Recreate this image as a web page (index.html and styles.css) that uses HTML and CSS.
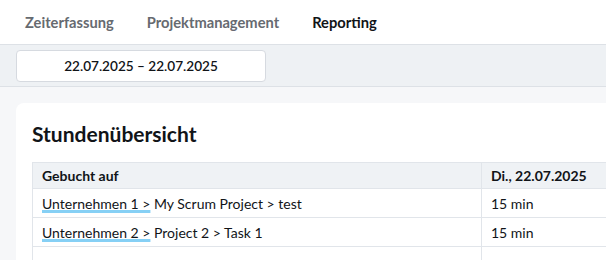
FILE: index.html
```html
<!DOCTYPE html>
<html lang="de">
  <head>
    <meta charset="UTF-8" />
    <meta name="viewport" content="width=device-width, initial-scale=1.0" />
    <title>Reporting</title>
    <link rel="stylesheet" href="styles.css">
  </head>
  <body>
    <header class="nav">
      <a class="nav-link">Zeiterfassung</a>
      <a class="nav-link">Projektmanagement</a>
      <a class="nav-link active">Reporting</a>
    </header>

    <div class="toolbar">
      <button class="date-range">22.07.2025 – 22.07.2025</button>
    </div>

    <main class="content">
      <section class="card">
        <h1>Stundenübersicht</h1>
        <table class="hours">
          <thead>
            <tr>
              <th class="col-target">Gebucht auf</th>
              <th class="col-day">Di., 22.07.2025</th>
            </tr>
          </thead>
          <tbody>
            <tr>
              <td><span class="company">Unternehmen 1 &gt;</span> My Scrum Project &gt; test</td>
              <td>15 min</td>
            </tr>
            <tr>
              <td><span class="company">Unternehmen 2 &gt;</span> Project 2 &gt; Task 1</td>
              <td>15 min</td>
            </tr>
            <tr class="empty">
              <td></td>
              <td></td>
            </tr>
          </tbody>
        </table>
      </section>
    </main>
  </body>
</html>
```

FILE: styles.css
```css
body {
  margin: 0;
  overflow: hidden;
  font-family: Lato, "Liberation Sans", sans-serif;
  color: #111418;
  background: #f6f7f9;
}

.nav {
  display: flex;
  gap: 33px;
  height: 44px;
  padding-left: 25px;
  align-items: center;
  background: #fff;
  border-bottom: 1px solid #dde1e6;
}

.nav-link {
  font-size: 14.7px;
  font-weight: 700;
  color: #666a70;
}

.nav-link.active {
  color: #111418;
}

.toolbar {
  height: 41px;
  padding-left: 16px;
  display: flex;
  align-items: center;
  background: #eef1f4;
  border-bottom: 1px solid #dde1e6;
}

.date-range {
  width: 250px;
  height: 32px;
  background: #fff;
  border: 1px solid #d6dae0;
  border-radius: 4px;
  font-family: inherit;
  font-size: 13.6px;
  font-weight: 600;
  color: #111418;
}

.content {
  padding: 16px 0 0 16px;
}

.card {
  width: 640px;
  height: 200px;
  padding: 0 16px;
  background: #fff;
  border-radius: 8px;
}

h1 {
  margin: 0;
  padding: 19px 0 16px;
  font-size: 21px;
  line-height: 24px;
  font-weight: 700;
}

.hours {
  width: 620px;
  border-collapse: collapse;
  font-size: 14px;
}

.hours th,
.hours td {
  height: 28px;
  padding: 0 9px;
  text-align: left;
  border: 1px solid #e1e5ea;
  border-right: none;
}

.hours th {
  height: 25px;
  font-weight: 700;
  background: #eff2f5;
}

.col-target {
  width: 430px;
}

.company {
  text-decoration: underline 3px #86d0f5;
  text-underline-offset: 1px;
}
```
